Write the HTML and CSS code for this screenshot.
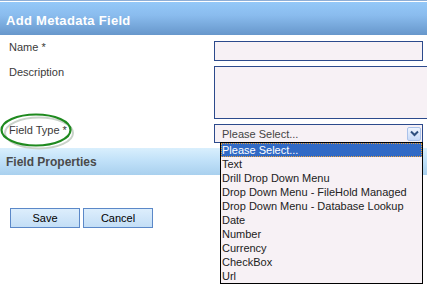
FILE: index.html
```html
<!DOCTYPE html>
<html lang="en">
<head>
    <meta charset="UTF-8">
    <title>Add Metadata Field</title>
    <link rel="stylesheet" href="styles.css">
</head>
<body>
    <div class="topline"></div>
    <div class="page-header">Add Metadata Field</div>

    <div class="form">
        <label class="form-label">Name *</label>
        <div class="form-field"><div class="input"></div></div>

        <label class="form-label">Description</label>
        <div class="form-field"><div class="textarea"></div></div>

        <label class="form-label">Field Type *</label>
        <div class="form-field">
            <div class="select">
                <span>Please Select...</span>
                <span class="select-btn">
                    <svg width="9" height="7" viewBox="0 0 9 7"><path d="M1 1.5 L4.5 5 L8 1.5" fill="none" stroke="#2f4f7f" stroke-width="2"/></svg>
                </span>
            </div>
        </div>
    </div>

    <div class="section-bar">Field Properties</div>

    <div class="buttons">
        <button class="btn">Save</button>
        <button class="btn">Cancel</button>
    </div>

    <!-- annotation circle -->
    <svg class="ring" width="80" height="40" viewBox="0 0 80 40">
        <ellipse cx="37" cy="18" rx="34" ry="15.5" fill="none" stroke="#c9d2c9" stroke-width="2" transform="translate(2,2)"/>
        <ellipse cx="36" cy="17" rx="34.5" ry="15.5" fill="none" stroke="#1f8a1f" stroke-width="2.2"/>
    </svg>

    <!-- open dropdown list -->
    <ul class="dropdown">
        <li class="selected">Please Select...</li>
        <li>Text</li>
        <li>Drill Drop Down Menu</li>
        <li>Drop Down Menu - FileHold Managed</li>
        <li>Drop Down Menu - Database Lookup</li>
        <li>Date</li>
        <li>Number</li>
        <li>Currency</li>
        <li>CheckBox</li>
        <li>Url</li>
    </ul>
</body>
</html>
```

FILE: styles.css
```css
body {
    margin: 0;
    width: 427px;
    height: 288px;
    overflow: hidden;
    background: #fff;
    font-family: "Liberation Sans", Arial, sans-serif;
    font-size: 11px;
    color: #3a3a3a;
    position: relative;
}

.topline {
    height: 1px;
    background: #8eaed6;
    border-bottom: 1px solid #fff;
}

.page-header {
    height: 33px;
    box-sizing: border-box;
    padding: 11px 0 0 6px;
    background: linear-gradient(#94c8f8, #8abcee 40%, #6797cb);
    color: #fff;
    font-weight: bold;
    font-size: 13px;
    letter-spacing: 0.3px;
}

.form {
    display: grid;
    grid-template-columns: 205px 213px;
    row-gap: 5px;
    padding: 6px 0 0 9px;
}

.form-label {
    line-height: 13px;
}

.input, .textarea, .select {
    box-sizing: border-box;
    border: 1px solid #2c4a8c;
    background: #f7f1f5;
}

.input {
    width: 209px;
    height: 20px;
}

.textarea {
    width: 220px;
    height: 53px;
}

.select {
    width: 209px;
    height: 19px;
    display: flex;
    align-items: center;
    justify-content: space-between;
    padding: 0 1px 0 7px;
    color: #444;
}

.select-btn {
    width: 14px;
    height: 14px;
    box-sizing: border-box;
    border: 1px solid #aac2ea;
    border-radius: 2px;
    background: linear-gradient(#eef4fe, #c8daf8);
    display: flex;
    align-items: center;
    justify-content: center;
}

.section-bar {
    margin-top: 5px;
    height: 27px;
    box-sizing: border-box;
    padding: 7px 0 0 6px;
    background: linear-gradient(#d9effd, #bfe0f8 50%, #a9d0ee);
    color: #4a4a4a;
    font-weight: bold;
    font-size: 12px;
}

.buttons {
    display: flex;
    gap: 3px;
    padding: 33px 0 0 10px;
}

.btn {
    width: 70px;
    height: 20px;
    margin: 0;
    padding: 0;
    border: 1px solid #5b88c8;
    background: linear-gradient(#ddeefc, #c3def6);
    font-family: inherit;
    font-size: 11px;
    color: #000;
}

.ring {
    position: absolute;
    left: 0;
    top: 113px;
}

.dropdown {
    position: absolute;
    left: 220px;
    top: 142px;
    width: 203px;
    height: 142px;
    box-sizing: border-box;
    margin: 0;
    padding: 0;
    list-style: none;
    border: 1px solid #000;
    background: #f7f1f5;
    color: #222;
}

.dropdown li {
    height: 14px;
    line-height: 14px;
    padding-left: 1px;
    white-space: nowrap;
}

.dropdown li.selected {
    box-sizing: border-box;
    background: #316ac5;
    color: #fff;
    border: 1px dotted #e8a040;
    line-height: 12px;
    padding-left: 0;
}
```
